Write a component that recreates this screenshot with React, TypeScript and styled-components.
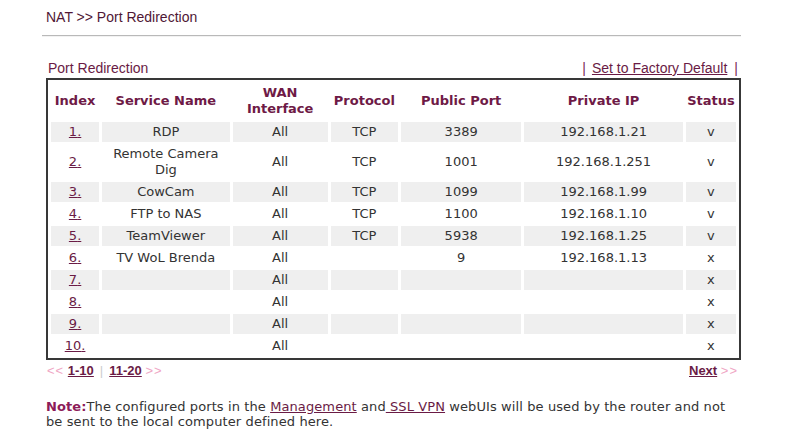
import React from 'react';
import styled, { createGlobalStyle } from 'styled-components';

// === STYLED COMPONENTS ===
const GlobalStyle = createGlobalStyle`
    body { margin: 0; background: #fff; font-family: "DejaVu Sans", Verdana, sans-serif; }
`;
const Page = styled.div` width: 695px; padding: 8px 0 0 46px; `;
const Title = styled.div`
    font: 14px/18px "Liberation Sans", Arial, sans-serif; color: #4f1735;
`;
const Rule = styled.div`
    margin: 9px 0 0 -4px; height: 0; border-top: 1px solid #b9b9b9; border-bottom: 1px solid #f2f2f2;
`;
const SectionBar = styled.div`
    display: flex; justify-content: space-between; align-items: flex-end;
    margin-top: 23px; padding: 0 3px 0 2px;
    font: 14px/16px "Liberation Sans", Arial, sans-serif; color: #6a1b45;
`;
const Pipe = styled.span` color: #7a2a55; margin: 0 6px 0 0; &:last-child { margin: 0 0 0 7px; } `;
const Link = styled.a<{ $bold?: boolean }>`
    color: #6a1b45; text-decoration: underline; cursor: pointer;
    font-weight: ${p => (p.$bold ? 'bold' : 'normal')};
`;
const Frame = styled.div` margin-top: 2px; border: 2px solid #383838; `;
const Table = styled.table`
    width: 100%; border-collapse: separate; border-spacing: 3px 2px; table-layout: fixed;
`;
const Th = styled.th`
    font-size: 13px; line-height: 16px; font-weight: bold; color: #6e1a46;
    padding: 3px 1px; text-align: center; vertical-align: middle;
`;
const Td = styled.td<{ $shade: boolean }>`
    font-size: 13px; line-height: 16px; color: #333;
    padding: 2px 3px; text-align: center; vertical-align: middle;
    background: ${p => (p.$shade ? '#efefef' : '#fff')};
`;
const Pager = styled.div`
    display: flex; justify-content: space-between; align-items: center;
    margin-top: 3px; padding: 0 3px 0 1px;
    font: bold 13px/16px "Liberation Sans", Arial, sans-serif;
`;
const Arrows = styled.span` color: #efa6c4; font-weight: normal; letter-spacing: 1px; `;
const PageSep = styled.span` color: #ccc; font-weight: normal; margin: 0 6px; `;
const Note = styled.p`
    margin: 20px 0 0; width: 684px; font-size: 13px; line-height: 15px; color: #333;
    letter-spacing: 0.1px;
`;
const NoteLabel = styled.b` color: #8d1c59; `;

type Rule = { name: string; proto: string; pub: string; ip: string; on: boolean };

const rules: Rule[] = [
    { name: 'RDP', proto: 'TCP', pub: '3389', ip: '192.168.1.21', on: true },
    { name: 'Remote Camera Dig', proto: 'TCP', pub: '1001', ip: '192.168.1.251', on: true },
    { name: 'CowCam', proto: 'TCP', pub: '1099', ip: '192.168.1.99', on: true },
    { name: 'FTP to NAS', proto: 'TCP', pub: '1100', ip: '192.168.1.10', on: true },
    { name: 'TeamViewer', proto: 'TCP', pub: '5938', ip: '192.168.1.25', on: true },
    { name: 'TV WoL Brenda', proto: '', pub: '9', ip: '192.168.1.13', on: false },
    { name: '', proto: '', pub: '', ip: '', on: false },
    { name: '', proto: '', pub: '', ip: '', on: false },
    { name: '', proto: '', pub: '', ip: '', on: false },
    { name: '', proto: '', pub: '', ip: '', on: false },
];

const App: React.FC = () => (
    <Page>
        <GlobalStyle />
        <Title>NAT &gt;&gt; Port Redirection</Title>
        <Rule />
        <SectionBar>
            <span>Port Redirection</span>
            <span>
                <Pipe>|</Pipe>
                <Link>Set to Factory Default</Link>
                <Pipe>|</Pipe>
            </span>
        </SectionBar>
        <Frame>
            <Table>
                <colgroup>
                    <col style={{ width: 48 }} />
                    <col style={{ width: 127 }} />
                    <col style={{ width: 95 }} />
                    <col style={{ width: 67 }} />
                    <col style={{ width: 120 }} />
                    <col style={{ width: 158 }} />
                    <col style={{ width: 50 }} />
                </colgroup>
                <thead>
                    <tr>
                        <Th>Index</Th>
                        <Th>Service Name</Th>
                        <Th>WAN<br />Interface</Th>
                        <Th>Protocol</Th>
                        <Th>Public Port</Th>
                        <Th>Private IP</Th>
                        <Th>Status</Th>
                    </tr>
                </thead>
                <tbody>
                    {rules.map((r, i) => {
                        const shade = i % 2 === 0;
                        return (
                            <tr key={i}>
                                <Td $shade={shade}><Link>{i + 1}.</Link></Td>
                                <Td $shade={shade}>{r.name}</Td>
                                <Td $shade={shade}>All</Td>
                                <Td $shade={shade}>{r.proto}</Td>
                                <Td $shade={shade}>{r.pub}</Td>
                                <Td $shade={shade}>{r.ip}</Td>
                                <Td $shade={shade}>{r.on ? 'v' : 'x'}</Td>
                            </tr>
                        );
                    })}
                </tbody>
            </Table>
        </Frame>
        <Pager>
            <span>
                <Arrows>&lt;&lt;</Arrows> <Link $bold>1-10</Link>
                <PageSep>|</PageSep>
                <Link $bold>11-20</Link> <Arrows>&gt;&gt;</Arrows>
            </span>
            <span>
                <Link $bold>Next</Link> <Arrows>&gt;&gt;</Arrows>
            </span>
        </Pager>
        <Note>
            <NoteLabel>Note:</NoteLabel>The configured ports in the <Link>Management</Link> and<Link> SSL VPN</Link> webUIs
            will be used by the router and not be sent to the local computer defined here.
        </Note>
    </Page>
);

export default App;
